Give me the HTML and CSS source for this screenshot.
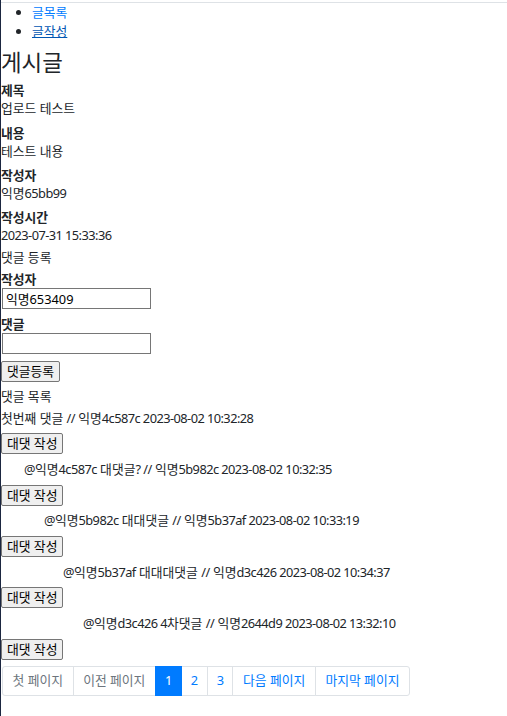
FILE: index.html
```html
<!DOCTYPE html>
<html lang="ko">
<head>
  <meta charset="UTF-8">
  <title>게시글</title>
  <link rel="stylesheet" href="styles.css">
</head>
<body>
  <div class="topbar"></div>

  <!-- 상단 메뉴 -->
  <ul class="menu">
    <li><a href="#">글목록</a></li>
    <li><a href="#" class="active">글작성</a></li>
  </ul>

  <h3 class="title">게시글</h3>

  <div class="field">
    <div class="label">제목</div>
    <div class="value">업로드 테스트</div>
  </div>
  <div class="field">
    <div class="label">내용</div>
    <div class="value">테스트 내용</div>
  </div>
  <div class="field">
    <div class="label">작성자</div>
    <div class="value">익명<span class="en">65bb99</span></div>
  </div>
  <div class="field">
    <div class="label">작성시간</div>
    <div class="value"><span class="en">2023-07-31 15:33:36</span></div>
  </div>

  <!-- 댓글 등록 -->
  <div class="section">댓글 등록</div>
  <form class="comment-form">
    <div class="label form-label">작성자</div>
    <input type="text" class="input" value="익명653409">
    <div class="label form-label">댓글</div>
    <input type="text" class="input">
    <button type="button" class="btn">댓글등록</button>
  </form>

  <!-- 댓글 목록 -->
  <div class="section list-title">댓글 목록</div>
  <div class="comments">
    <div class="comment depth-0">
      <div class="comment-text">첫번째 댓글 <span class="en">//</span> 익명<span class="en">4c587c 2023-08-02 10:32:28</span></div>
      <button type="button" class="btn">대댓 작성</button>
    </div>
    <div class="comment depth-1">
      <div class="comment-text"><span class="en">@</span>익명<span class="en">4c587c</span> 대댓글<span class="en">? //</span> 익명<span class="en">5b982c 2023-08-02 10:32:35</span></div>
      <button type="button" class="btn">대댓 작성</button>
    </div>
    <div class="comment depth-2">
      <div class="comment-text"><span class="en">@</span>익명<span class="en">5b982c</span> 대대댓글 <span class="en">//</span> 익명<span class="en">5b37af 2023-08-02 10:33:19</span></div>
      <button type="button" class="btn">대댓 작성</button>
    </div>
    <div class="comment depth-3">
      <div class="comment-text"><span class="en">@</span>익명<span class="en">5b37af</span> 대대대댓글 <span class="en">//</span> 익명<span class="en">d3c426 2023-08-02 10:34:37</span></div>
      <button type="button" class="btn">대댓 작성</button>
    </div>
    <div class="comment depth-4">
      <div class="comment-text"><span class="en">@</span>익명<span class="en">d3c426 4</span>차댓글 <span class="en">//</span> 익명<span class="en">2644d9 2023-08-02 13:32:10</span></div>
      <button type="button" class="btn">대댓 작성</button>
    </div>
  </div>

  <!-- 페이지 -->
  <ul class="pagination">
    <li class="page-item disabled"><a class="page-link" href="#">첫 페이지</a></li>
    <li class="page-item disabled"><a class="page-link" href="#">이전 페이지</a></li>
    <li class="page-item active"><a class="page-link num" href="#">1</a></li>
    <li class="page-item"><a class="page-link num" href="#">2</a></li>
    <li class="page-item"><a class="page-link num" href="#">3</a></li>
    <li class="page-item"><a class="page-link" href="#">다음 페이지</a></li>
    <li class="page-item"><a class="page-link" href="#">마지막 페이지</a></li>
  </ul>
</body>
</html>
```

FILE: styles.css
```css
body {
  margin: 0;
  padding: 0;
  min-height: 716px;
  box-sizing: border-box;
  border-left: 1px solid #1b2640;
  font-family: "Noto Sans", "Noto Sans CJK KR", sans-serif;
  font-size: 12.8px;
  line-height: 19.2px;
  color: #212529;
  background: #fff;
}

/* latin text runs a bit narrower in the original */
.en {
  letter-spacing: -0.55px;
}

.topbar {
  height: 2px;
  border-bottom: 1px solid #dee2e6;
}

/* 상단 메뉴 */
.menu {
  margin: 0;
  padding-left: 31px;
}

.menu a {
  color: #007bff;
  text-decoration: none;
}

.menu a.active {
  color: #0056b3;
  text-decoration: underline;
}

.title {
  margin: 8px 0 5px;
  font-size: 22.4px;
  line-height: 27px;
  font-weight: 400;
}

.label {
  font-weight: 700;
  line-height: 18px;
}

.value {
  line-height: 18.6px;
}

.field + .field {
  margin-top: 5.6px;
}

.section {
  margin-top: 3px;
}

/* 댓글 등록 */
.comment-form {
  margin: 0;
}

.form-label {
  margin-top: 3.4px;
}

.input {
  display: block;
  box-sizing: border-box;
  width: 149px;
  height: 21px;
  margin: 0 0 0 1px;
  padding: 1px 3px;
  border: 1px solid #767676;
  border-radius: 0;
  font: inherit;
  line-height: 17px;
  color: #000;
}

.input + .form-label {
  margin-top: 6px;
}

.btn {
  display: block;
  height: 21px;
  margin: 0;
  padding: 0 5px;
  border: 1px solid #767676;
  border-radius: 2px;
  background: #efefef;
  font: inherit;
  line-height: 17px;
  color: #000;
}

.comment-form .btn {
  margin-top: 7px;
}

.list-title {
  margin-top: 5px;
}

/* 댓글 목록 */
.comments {
  margin-top: 2.2px;
}

.comment-text {
  margin-bottom: 5.4px;
}

.comment .btn {
  margin-bottom: 5.8px;
}

.depth-1 .comment-text { padding-left: 23px; }
.depth-2 .comment-text { padding-left: 43px; }
.depth-3 .comment-text { padding-left: 62px; }
.depth-4 .comment-text { padding-left: 82px; }

/* 페이지 */
.pagination {
  display: flex;
  margin: 1px 0 0 1px;
  padding: 0;
  list-style: none;
}

.page-link {
  display: block;
  margin-left: -1px;
  padding: 6.5px 9.6px;
  line-height: 15px;
  border: 1px solid #dee2e6;
  color: #007bff;
  text-decoration: none;
  background: #fff;
}

.page-link.num {
  padding: 6.5px 9px;
  letter-spacing: -0.5px;
}

.page-item:first-child .page-link {
  margin-left: 0;
  border-radius: 3px 0 0 3px;
}

.page-item:last-child .page-link {
  border-radius: 0 3px 3px 0;
}

.page-item.disabled .page-link {
  color: #6c757d;
}

.page-item.active .page-link {
  position: relative;
  z-index: 1;
  color: #fff;
  background: #007bff;
  border-color: #007bff;
}
```
